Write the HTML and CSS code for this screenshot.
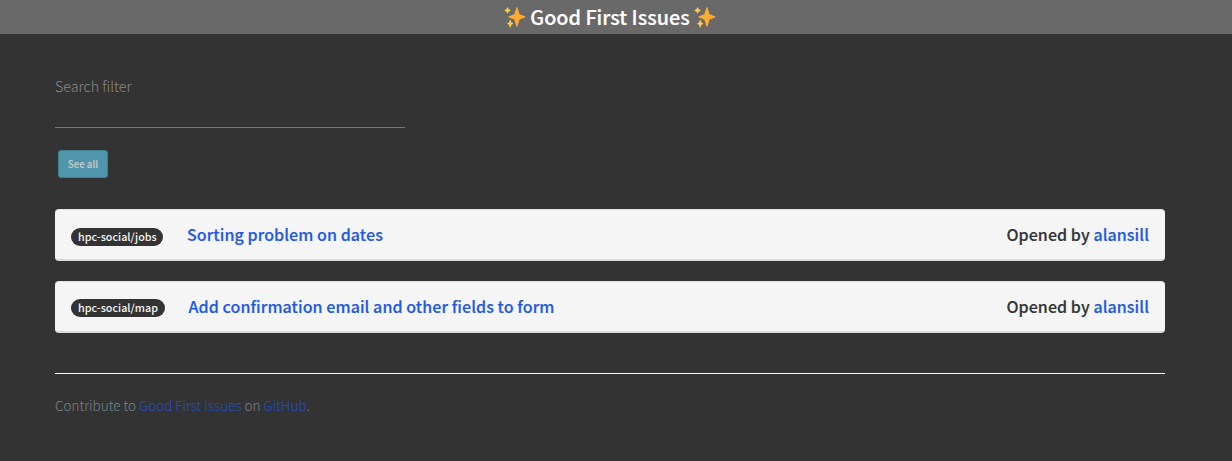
FILE: index.html
```html
<!DOCTYPE html>
<html lang="en">
<head>
<meta charset="utf-8">
<title>Good First Issues</title>
<link rel="stylesheet" href="styles.css">
</head>
<body>
<svg class="defs" aria-hidden="true">
  <symbol id="sparkles" viewBox="0 0 36 36">
    <path fill="#ffac33" d="M34.347 16.893l-8.899-3.294-3.323-10.891c-.128-.42-.517-.708-.956-.708-.439 0-.828.288-.956.708l-3.322 10.891-8.9 3.294c-.393.146-.653.519-.653.938 0 .418.26.793.653.938l8.895 3.293 3.324 11.223c.126.424.516.715.959.715.442 0 .833-.291.959-.716l3.324-11.223 8.896-3.293c.391-.144.652-.518.652-.937 0-.418-.261-.792-.653-.938z"/>
    <path fill="#ffcc4d" d="M14.347 27.894l-2.314-.856-.9-3.3c-.118-.436-.513-.738-.964-.738-.451 0-.846.302-.965.737l-.9 3.3-2.313.856c-.393.146-.653.52-.653.938 0 .418.26.793.653.938l2.301.853.907 3.622c.112.444.511.756.97.756.459 0 .858-.312.97-.757l.907-3.622 2.301-.853c.393-.144.653-.519.653-.937 0-.418-.26-.792-.653-.937zM10.009 6.231l-2.364-.875-.876-2.365c-.145-.393-.519-.653-.938-.653-.418 0-.792.26-.938.653l-.875 2.365-2.365.875c-.393.146-.653.52-.653.938 0 .418.26.793.653.938l2.365.875.875 2.365c.146.393.52.653.938.653.418 0 .792-.26.938-.653l.875-2.365 2.365-.875c.393-.146.653-.52.653-.938 0-.418-.26-.792-.653-.938z"/>
  </symbol>
</svg>
<header class="site-header">
  <svg class="sparkle"><use href="#sparkles"/></svg>
  <h1 class="site-title">Good First Issues</h1>
  <svg class="sparkle"><use href="#sparkles"/></svg>
</header>
<main class="content">
  <label class="filter-label" for="filter">Search filter</label>
  <input class="filter-input" id="filter" type="text">
  <button class="see-all">See all</button>
  <article class="issue">
    <span class="repo repo-jobs">hpc-social/jobs</span>
    <a class="issue-title">Sorting problem on dates</a>
    <span class="author">Opened by <a>alansill</a></span>
  </article>
  <article class="issue">
    <span class="repo repo-map">hpc-social/map</span>
    <a class="issue-title title-map">Add confirmation email and other fields to form</a>
    <span class="author">Opened by <a>alansill</a></span>
  </article>
  <footer class="site-footer">Contribute to <a>Good First Issues</a> on <a>GitHub</a>.</footer>
</main>
</body>
</html>
```
FILE: styles.css
```css
* { box-sizing: border-box; }
body {
  margin: 0;
  height: 461px;
  overflow: hidden;
  background: #333;
  font-family: "Noto Sans CJK SC", "Noto Sans", sans-serif;
}
.defs { display: none; }
.site-header {
  display: flex;
  justify-content: center;
  align-items: center;
  gap: 4px;
  height: 34px;
  padding: 0 12px 1px 0;
  background: #696969;
}
.sparkle { width: 22px; height: 22px; }
.site-title {
  margin: 0;
  color: #fff;
  font-size: 19.8px;
  font-weight: 500;
  line-height: 34px;
  -webkit-text-stroke: 0.2px;
}
.content {
  display: flex;
  flex-direction: column;
  width: 1110px;
  margin-left: 55px;
  padding-top: 41px;
}
.filter-label {
  height: 23px;
  color: #8a8a8a;
  font-size: 14.3px;
  font-weight: 300;
  line-height: 22px;
}
.filter-input {
  width: 350px;
  height: 30px;
  padding: 0;
  border: 0;
  border-bottom: 1px solid #777;
  background: transparent;
}
.see-all {
  width: 50px;
  height: 28px;
  margin: 22px 0 31px 3px;
  padding: 0;
  border: 1px solid #417f92;
  border-radius: 3px;
  background: #5096ab;
  color: #c5c9ca;
  font: 500 9.7px/26px "Noto Sans CJK SC", sans-serif;
  -webkit-text-stroke: 0.15px;
}
.issue {
  display: flex;
  align-items: center;
  height: 52px;
  margin-bottom: 20px;
  padding: 0 16px;
  border: 1px solid #ddd;
  border-width: 1px 0 2px;
  border-radius: 4px;
  background: #f5f5f5;
  color: #333;
  font-size: 16px;
  font-weight: 500;
  line-height: 24px;
  letter-spacing: 0.08px;
  -webkit-text-stroke: 0.18px;
}
.issue a { color: #1d58e6; }
.repo {
  width: 92px;
  height: 18px;
  margin-top: 4px;
  padding-left: 7px;
  border-radius: 9px;
  background: #333;
  color: #f5f5f5;
  font-size: 10.75px;
  line-height: 17px;
  letter-spacing: 0.02px;
  -webkit-text-stroke: 0;
  white-space: nowrap;
}
.repo-map {
  width: 94px;
  margin-top: 2px;
}
.issue-title, .author { margin-bottom: 2px; }
.issue-title { margin-left: 24px; }
.title-map { margin-left: 23.5px; }
.author { margin-left: auto; }
.site-footer {
  margin-top: 20px;
  padding-top: 19px;
  border-top: 1px solid #f5f5f5;
  color: #78848a;
  font-size: 13.5px;
  font-weight: 300;
  line-height: 24px;
}
.site-footer a { color: #2150c4; }
```
